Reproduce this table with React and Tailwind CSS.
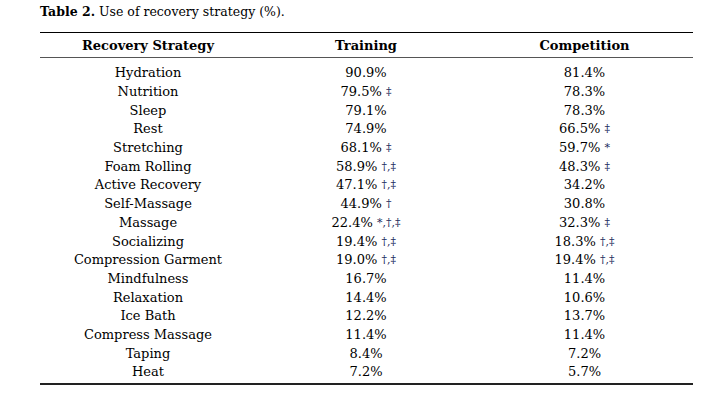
import React from "react";

const rows = [
  ["Hydration", "90.9%", "", "81.4%", ""],
  ["Nutrition", "79.5%", "‡", "78.3%", ""],
  ["Sleep", "79.1%", "", "78.3%", ""],
  ["Rest", "74.9%", "", "66.5%", "‡"],
  ["Stretching", "68.1%", "‡", "59.7%", "*"],
  ["Foam Rolling", "58.9%", "†,‡", "48.3%", "‡"],
  ["Active Recovery", "47.1%", "†,‡", "34.2%", ""],
  ["Self-Massage", "44.9%", "†", "30.8%", ""],
  ["Massage", "22.4%", "*,†,‡", "32.3%", "‡"],
  ["Socializing", "19.4%", "†,‡", "18.3%", "†,‡"],
  ["Compression Garment", "19.0%", "†,‡", "19.4%", "†,‡"],
  ["Mindfulness", "16.7%", "", "11.4%", ""],
  ["Relaxation", "14.4%", "", "10.6%", ""],
  ["Ice Bath", "12.2%", "", "13.7%", ""],
  ["Compress Massage", "11.4%", "", "11.4%", ""],
  ["Taping", "8.4%", "", "7.2%", ""],
  ["Heat", "7.2%", "", "5.7%", ""],
];

function Val({ v, m }) {
  return (
    <span>
      {v}
      {m && (
        <>
          {" "}
          <sup className="text-[11px] font-['DejaVu_Serif',serif] text-[#1a2b5c] relative top-[-1px]">{m}</sup>
        </>
      )}
    </span>
  );
}

export default function App() {
  return (
    <div className="w-[706px] h-[401px] bg-white pl-[40px] pr-[13px] pt-[4px] font-['DejaVu_Serif',serif] text-black">
      <div className="text-[12.5px] leading-[16px]">
        <span className="font-bold">Table 2.</span> Use of recovery strategy (%).
      </div>
      <div className="mt-[12px] border-t border-black">
        <div className="grid grid-cols-[216px_220px_217px] h-[25px] pt-[1px] items-center text-[13px] font-bold border-b border-[#555]">
          <div className="text-center">Recovery Strategy</div>
          <div className="text-center">Training</div>
          <div className="text-center">Competition</div>
        </div>
        <div className="pt-[6px] pb-[1px] border-b-2 border-[#222]">
          {rows.map((r) => (
            <div
              key={r[0]}
              className="grid grid-cols-[216px_220px_217px] h-[18.7px] items-center text-[13px] leading-[18px]"
            >
              <div className="text-center">{r[0]}</div>
              <div className="text-center">
                <Val v={r[1]} m={r[2]} />
              </div>
              <div className="text-center">
                <Val v={r[3]} m={r[4]} />
              </div>
            </div>
          ))}
        </div>
      </div>
    </div>
  );
}
